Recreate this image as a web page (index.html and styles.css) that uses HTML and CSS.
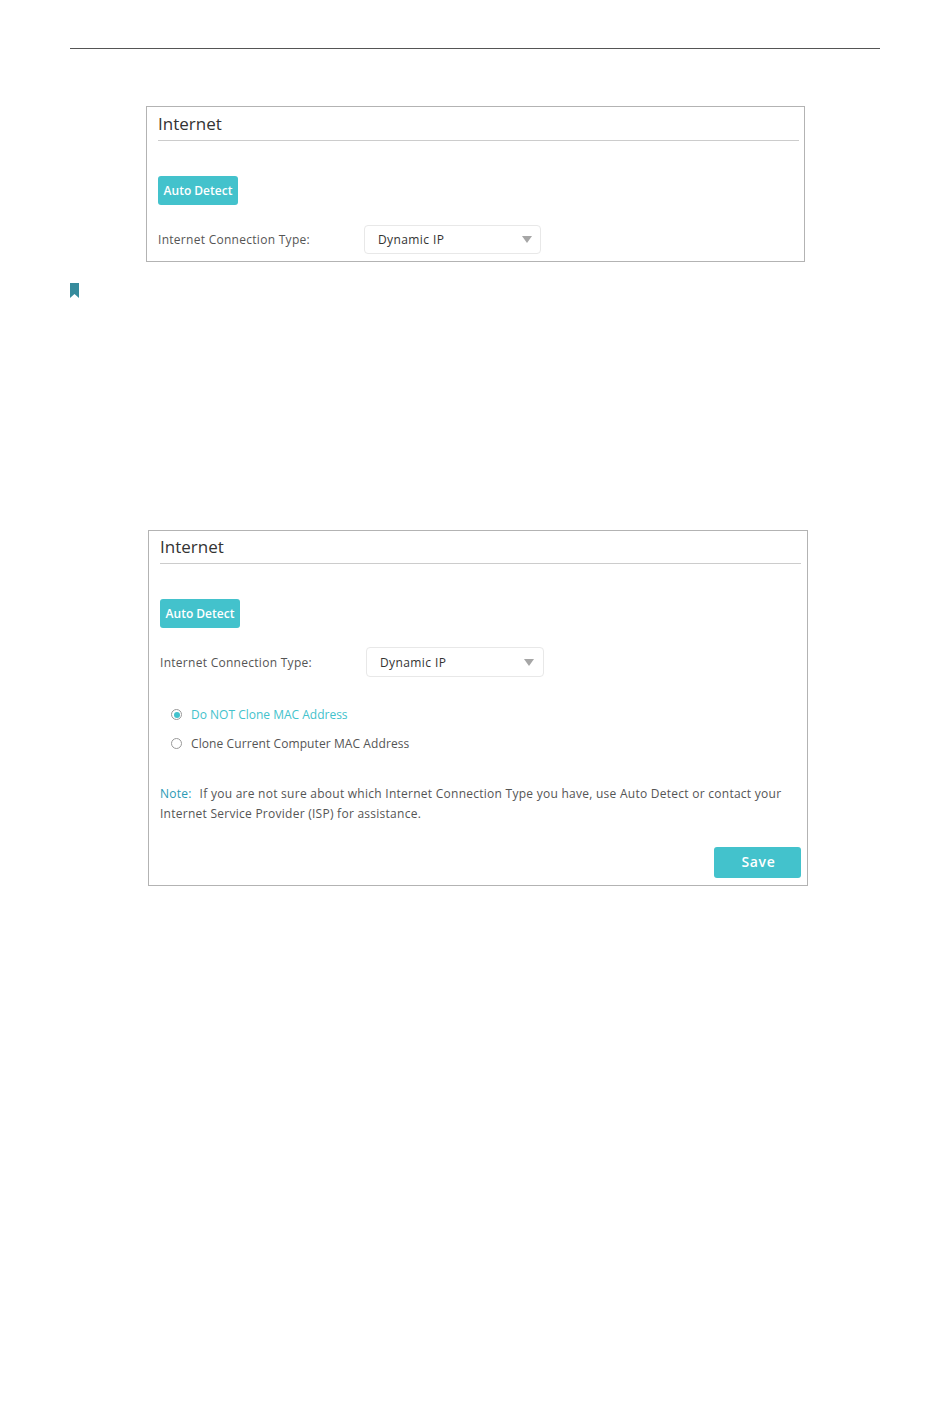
FILE: index.html
```html
<!DOCTYPE html>
<html>
<head>
    <title>Internet</title>
    <link rel="stylesheet" href="styles.css">
</head>
<body>
    <div class="page">
        <div class="top-rule"></div>

        <div class="panel panel-short">
            <h2 class="panel-title">Internet</h2>
            <button class="detect-btn" type="button">Auto Detect</button>
            <div class="field-row">
                <span class="field-label">Internet Connection Type:</span>
                <div class="select-box">
                    <span>Dynamic IP</span>
                    <span class="select-arrow"></span>
                </div>
            </div>
        </div>

        <svg class="bookmark" width="9" height="15" viewBox="0 0 9 15">
            <path d="M0 0H9V15L4.500 11L0 15Z" fill="#368b9c"/>
        </svg>

        <div class="panel panel-full">
            <h2 class="panel-title">Internet</h2>
            <button class="detect-btn" type="button">Auto Detect</button>
            <div class="field-row">
                <span class="field-label">Internet Connection Type:</span>
                <div class="select-box">
                    <span>Dynamic IP</span>
                    <span class="select-arrow"></span>
                </div>
            </div>

            <div class="radio-group">
                <div class="radio-row selected">
                    <span class="radio"></span>
                    <span>Do NOT Clone MAC Address</span>
                </div>
                <div class="radio-row">
                    <span class="radio"></span>
                    <span class="radio-text">Clone Current Computer MAC Address</span>
                </div>
            </div>

            <p class="note"><span class="note-tag">Note:</span> If you are not sure about which Internet Connection Type you have, use Auto Detect or contact your Internet Service Provider (ISP) for assistance.</p>

            <div class="save-row">
                <button class="save-btn" type="button">Save</button>
            </div>
        </div>
    </div>
</body>
</html>
```

FILE: styles.css
```css
body {
    background-color: #ffffff;
    color: #555555;
    font-family: 'Open Sans', sans-serif;
    font-size: 12px;
    margin: 0;
    padding: 0;
}

.page {
    padding: 48px 70px 0;
}

.top-rule {
    height: 1px;
    background-color: #555555;
}

.panel {
    width: 659px;
    box-sizing: border-box;
    border: 1px solid #b3b3b3;
    padding: 0 5px 0 11px;
}

.panel-short {
    height: 156px;
    margin: 57px 0 0 76px;
}

.panel-full {
    width: 660px;
    height: 356px;
    margin: 232px 0 0 78px;
    padding-right: 6px;
}

.panel-title {
    height: 33px;
    margin: 0 0 35px;
    border-bottom: 1px solid #cccccc;
    color: #333333;
    font-size: 17px;
    font-weight: 400;
    line-height: 33px;
}

.panel-full .panel-title {
    height: 32px;
    line-height: 32px;
}

.detect-btn {
    display: block;
    width: 80px;
    height: 29px;
    padding: 0;
    background-color: #43c2cc;
    color: #ffffff;
    border: none;
    border-radius: 3px;
    font-family: inherit;
    font-size: 12px;
    font-weight: 600;
}

.field-row {
    display: flex;
    align-items: center;
    margin-top: 20px;
}

.panel-full .field-row {
    margin-top: 19px;
}

.field-label {
    width: 206px;
    letter-spacing: 0.28px;
}

.select-box {
    display: flex;
    align-items: center;
    justify-content: space-between;
    box-sizing: border-box;
    width: 177px;
    height: 29px;
    padding: 0 8px 0 13px;
    border: 1px solid #e8e8e8;
    border-radius: 4px;
    color: #333333;
    letter-spacing: 0.4px;
}

.panel-full .select-box {
    width: 178px;
    height: 30px;
    padding-right: 9px;
}

.select-arrow {
    width: 0;
    height: 0;
    border-left: 5px solid transparent;
    border-right: 5px solid transparent;
    border-top: 7px solid #a6a6a6;
}

.bookmark {
    display: block;
    margin-top: 21px;
}

.radio-group {
    margin-top: 23px;
    padding-left: 11px;
}

.radio-row {
    display: flex;
    align-items: center;
    gap: 9px;
    height: 29px;
}

.radio {
    position: relative;
    box-sizing: border-box;
    width: 11px;
    height: 11px;
    border: 1px solid #999999;
    border-radius: 50%;
}

.radio-text {
    letter-spacing: 0.09px;
}

.radio-row.selected {
    color: #43c2cc;
}

.radio-row.selected .radio::after {
    content: "";
    position: absolute;
    top: 1.500px;
    left: 1.500px;
    width: 6px;
    height: 6px;
    border-radius: 50%;
    background-color: #43c2cc;
}

.note {
    margin: 26px 0 0;
    line-height: 20px;
    letter-spacing: 0.26px;
}

.note-tag {
    color: #2b9ab5;
    margin-right: 4.500px;
}

.save-row {
    display: flex;
    justify-content: flex-end;
    margin-top: 23px;
}

.save-btn {
    width: 87px;
    height: 31px;
    padding: 0 0 2px 2px;
    background-color: #43c2cc;
    color: #ffffff;
    border: none;
    border-radius: 3px;
    font-family: inherit;
    font-size: 14px;
    font-weight: 600;
    letter-spacing: 0.7px;
}
```
